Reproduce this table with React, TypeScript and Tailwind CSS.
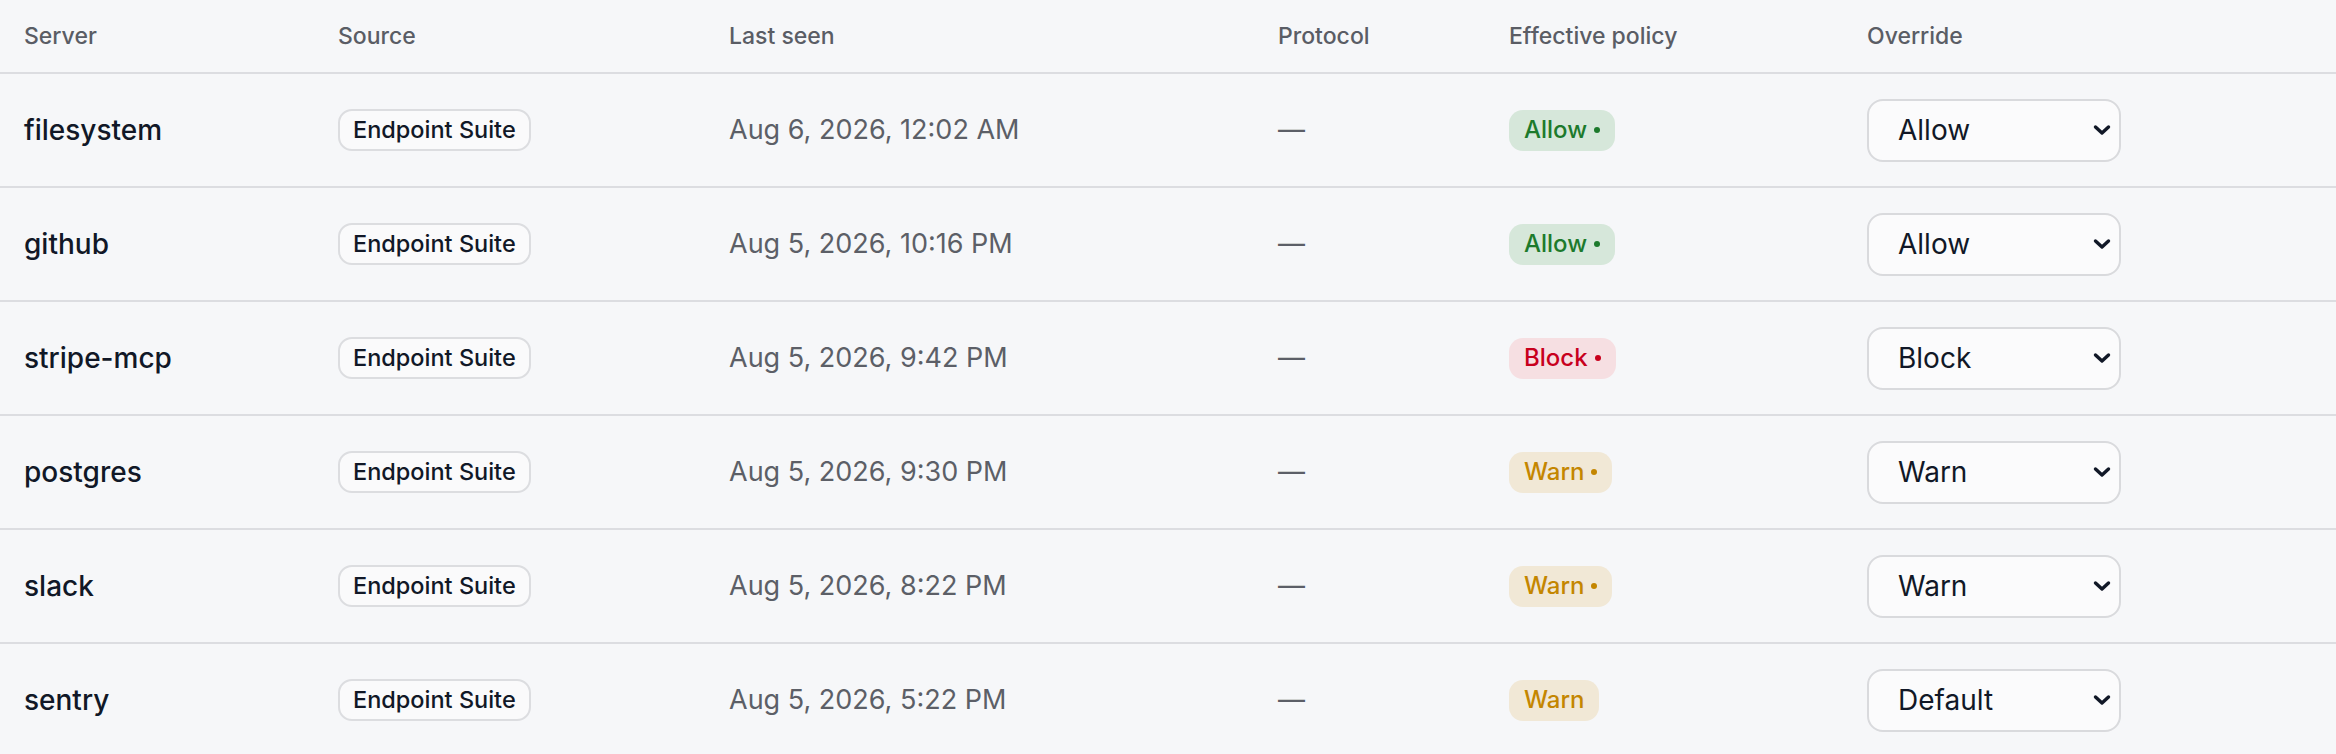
import React from 'react';

type Policy = 'Allow' | 'Block' | 'Warn';

const rows: { name: string; seen: string; policy: Policy; dot: boolean; override: string }[] = [
    { name: 'filesystem', seen: 'Aug 6, 2026, 12:02 AM', policy: 'Allow', dot: true, override: 'Allow' },
    { name: 'github', seen: 'Aug 5, 2026, 10:16 PM', policy: 'Allow', dot: true, override: 'Allow' },
    { name: 'stripe-mcp', seen: 'Aug 5, 2026, 9:42 PM', policy: 'Block', dot: true, override: 'Block' },
    { name: 'postgres', seen: 'Aug 5, 2026, 9:30 PM', policy: 'Warn', dot: true, override: 'Warn' },
    { name: 'slack', seen: 'Aug 5, 2026, 8:22 PM', policy: 'Warn', dot: true, override: 'Warn' },
    { name: 'sentry', seen: 'Aug 5, 2026, 5:22 PM', policy: 'Warn', dot: false, override: 'Default' },
];

const policyStyles: Record<Policy, string> = {
    Allow: 'bg-[#d6e7da] text-[#1d7a2c]',
    Block: 'bg-[#f6dfe2] text-[#c8001d]',
    Warn: 'bg-[#f1e8d6] text-[#c48600]',
};

const cols = 'grid grid-cols-[314px_391px_549px_231px_358px_1fr]';

const PolicyBadge: React.FC<{ policy: Policy; dot: boolean }> = ({ policy, dot }) => (
    <span className={`inline-flex items-center gap-[7px] h-[41px] px-[15px] rounded-[14px] text-[24px] font-medium ${policyStyles[policy]}`}>
        {policy}
        {dot && <span className="w-[6px] h-[6px] rounded-full bg-current" />}
    </span>
);

const Chevron = () => (
    <svg width="18" height="12" viewBox="0 0 18 12" className="text-[#111827]">
        <path d="M2.5 3 L9 9 L15.5 3" fill="none" stroke="currentColor" strokeWidth="3.4" strokeLinecap="round" strokeLinejoin="round" />
    </svg>
);

export default function App() {
    return (
        <div className="min-h-screen w-full bg-[#f6f7f9] text-[#111827]" style={{ fontFamily: 'Inter, "Noto Sans", sans-serif' }}>
            {/* Header */}
            <div className={`${cols} h-[74px] items-center border-b-2 border-[#dcdde1] text-[23px] text-[#5a5d65] font-medium`}>
                <div className="px-6">Server</div>
                <div className="px-6">Source</div>
                <div className="px-6">Last seen</div>
                <div className="px-6">Protocol</div>
                <div className="px-6">Effective policy</div>
                <div className="px-6">Override</div>
            </div>

            {rows.map((row) => (
                <div key={row.name} className={`${cols} h-[114px] items-center border-b-2 border-[#dcdde1]`}>
                    <div className="px-6 text-[28px] font-medium text-[#111827]">{row.name}</div>
                    <div className="px-6">
                        <span className="inline-flex items-center h-[42px] px-[13px] rounded-[14px] border-2 border-[#dcdde0] bg-[#fafafb] text-[23.5px] font-medium text-[#111827]">
                            Endpoint Suite
                        </span>
                    </div>
                    <div className="px-6 text-[27px] text-[#5c5f67]">{row.seen}</div>
                    <div className="px-6 text-[27px] text-[#5c5f67]">—</div>
                    <div className="px-6">
                        <PolicyBadge policy={row.policy} dot={row.dot} />
                    </div>
                    <div className="px-6">
                        <div className="flex items-center justify-between w-[254px] h-[63px] pl-[29px] pr-[8px] rounded-[16px] border-2 border-[#d9dadd] bg-[#fbfbfc] text-[28px] text-[#111827]">
                            <span>{row.override}</span>
                            <Chevron />
                        </div>
                    </div>
                </div>
            ))}
        </div>
    );
}
